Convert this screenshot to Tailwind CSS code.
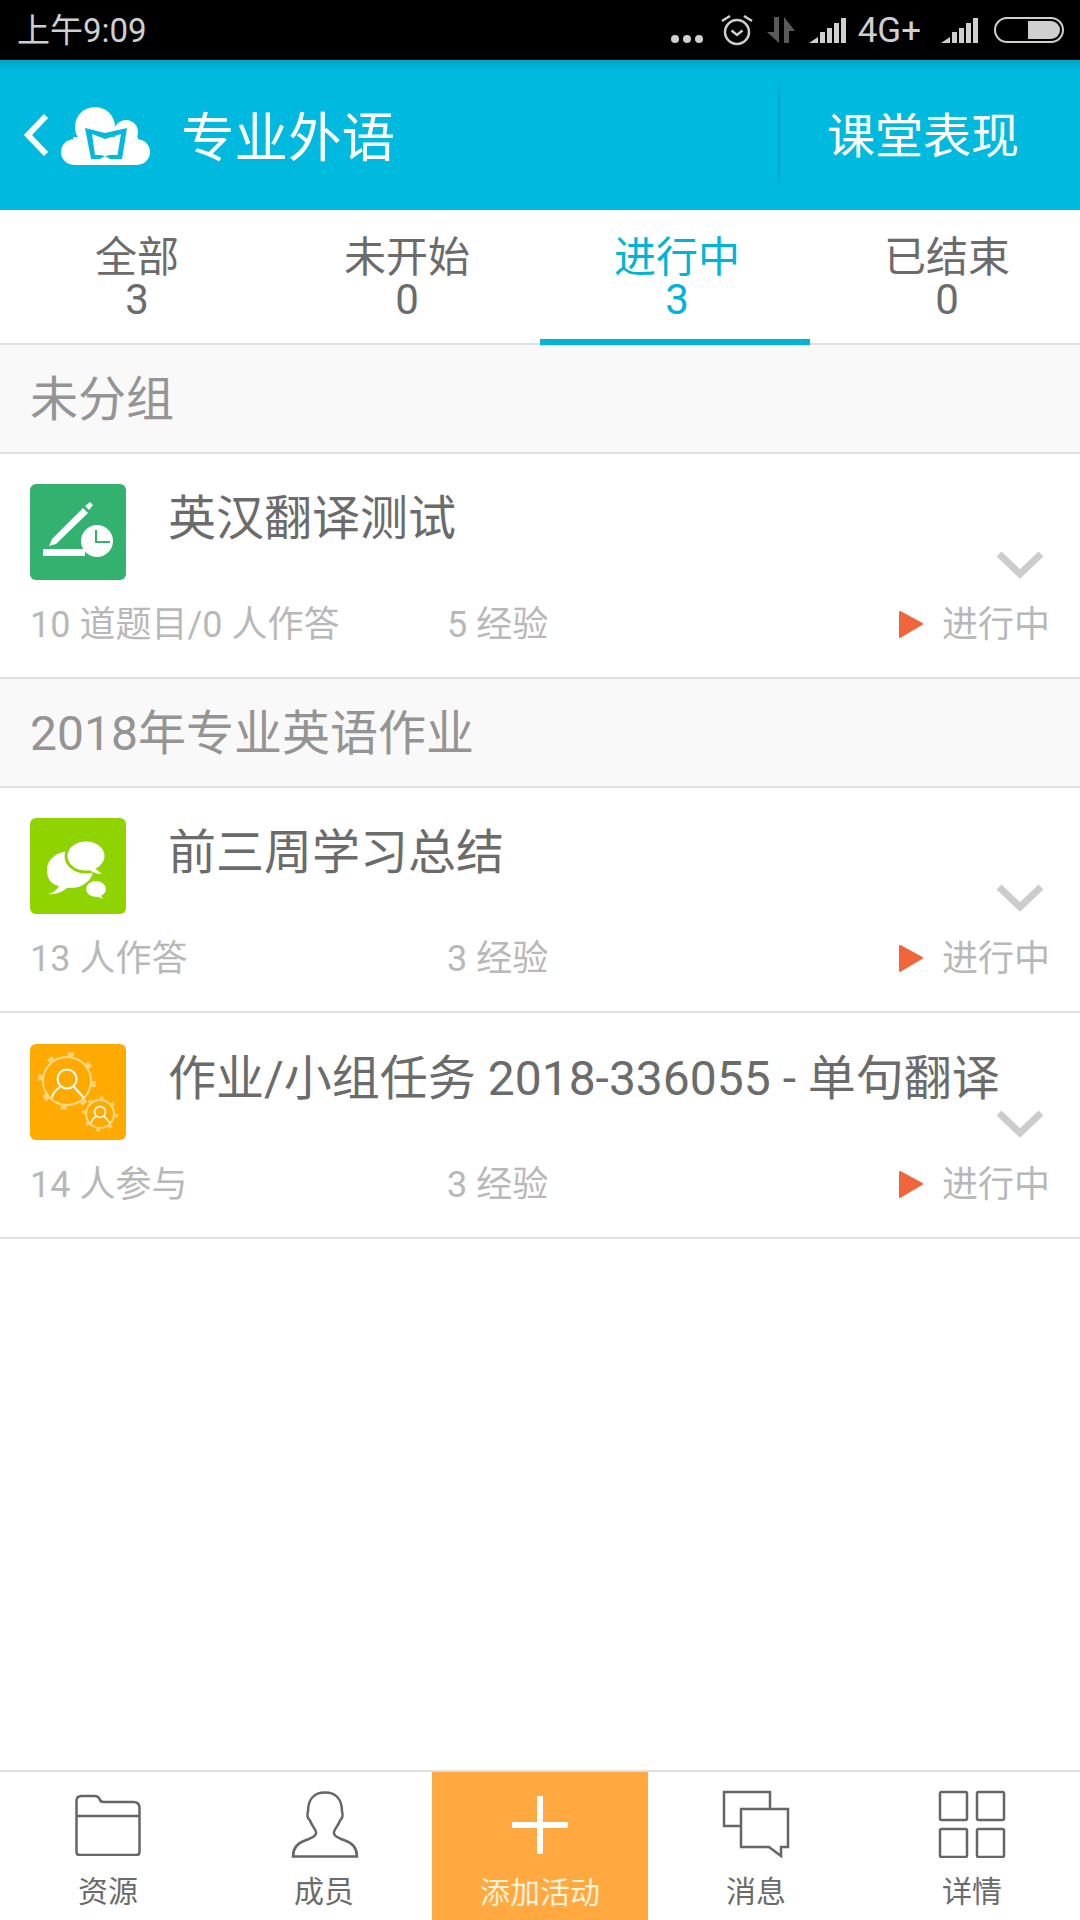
<!DOCTYPE html>
<html lang="zh-CN">
  <head>
    <meta charset="UTF-8" />
    <meta name="viewport" content="width=device-width, initial-scale=1.0" />
    <title>专业外语</title>
    <script src="https://cdn.jsdelivr.net/npm/@tailwindcss/browser@4"></script>
  </head>
  <body class="bg-white [font-family:Roboto,'Noto_Sans_CJK_SC',sans-serif]">
    <div class="flex flex-col w-[1080px] h-[1920px] overflow-hidden">
      <!-- status bar -->
      <div class="flex items-center h-[60px] bg-black text-[#cfcfcf] pl-[17px] pr-[16px] shrink-0">
        <span class="text-[33px] leading-none">上午9:09</span>
        <div class="ml-auto flex items-center">
          <svg width="32" height="10" viewBox="0 0 32 10" class="mt-[18px]" fill="#cfcfcf">
            <circle cx="4" cy="5" r="4" /><circle cx="16" cy="5" r="4" /><circle cx="28" cy="5" r="4" />
          </svg>
          <svg width="32" height="32" viewBox="0 0 32 32" class="ml-[18px]" fill="none" stroke="#cfcfcf" stroke-width="2.5">
            <circle cx="16" cy="18" r="12" />
            <path d="M10.500 16.500l5.500 4.500 5.500-4.500M1 7l8-5M31 7l-8-5" />
          </svg>
          <svg width="28" height="26" viewBox="0 0 28 26" class="ml-[14px]" fill="#5a5a5a">
            <path d="M7 0h5v26L0 15h7zM17 0l11 14h-6v12h-5z" />
          </svg>
          <svg width="37" height="25" viewBox="0 0 37 25" class="ml-[14px]" fill="#cfcfcf">
            <path d="M0 25l9-6v6zM11 14h5v11h-5zM18 10h5v15h-5zM25 5h5v20h-5zM32 0h5v25h-5z" />
          </svg>
          <span class="ml-[12px] text-[35px] leading-none">4G+</span>
          <svg width="37" height="25" viewBox="0 0 37 25" class="ml-[20px]" fill="#cfcfcf">
            <path d="M0 25l9-6v6zM11 14h5v11h-5zM18 10h5v15h-5zM25 5h5v20h-5zM32 0h5v25h-5z" />
          </svg>
          <div class="ml-[16px] flex justify-end w-[70px] h-[26px] rounded-full border-2 border-[#cfcfcf] p-[2px]">
            <div class="w-[32px] h-full rounded-r-full bg-[#cfcfcf]"></div>
          </div>
        </div>
      </div>

      <!-- header -->
      <div class="flex items-center h-[150px] shrink-0 bg-[#00b9df] bg-[linear-gradient(#00a5c5,#00b9df_11px)] text-white">
        <svg width="30" height="46" viewBox="0 0 30 46" class="ml-[22px]" fill="none" stroke="#fff" stroke-width="6">
          <path d="M24 4L6 23l18 19" />
        </svg>
        <svg width="89" height="58" viewBox="0 0 89 58" class="ml-[9px] mt-[2px]">
          <g fill="#fff">
            <circle cx="34" cy="20" r="20" /><circle cx="65" cy="25" r="12" />
            <circle cx="12.700" cy="45" r="12.700" /><circle cx="76.300" cy="45" r="12.700" />
            <path d="M12 30h65v28H12z" />
          </g>
          <path fill="#00b9df" fill-rule="evenodd" d="M24 21l20 5 22-5-5 31H49l-5-3-5 3h-9zM31 27l13 5 16-5-3.500 21H49l-5 1-5-1h-5z" />
        </svg>
        <span class="ml-[31px] mt-[7px] text-[53.5px] leading-none">专业外语</span>
        <div class="ml-auto w-[2px] h-[98px] bg-[#00a7ca]"></div>
        <span class="w-[300px] pr-[14px] text-center text-[48px] leading-none mt-[4px]">课堂表现</span>
      </div>

      <!-- tabs -->
      <div class="grid grid-cols-4 h-[135px] shrink-0 border-b-2 border-[#e0e0e0] text-[#6b6b6b] text-[42px] leading-[42px] text-center">
        <div class="pt-[27px] pl-[4px]"><div>全部</div><div>3</div></div>
        <div class="pt-[27px] pl-[4px]"><div>未开始</div><div>0</div></div>
        <div class="pt-[27px] pl-[4px] text-[#00b4d8] border-b-[6px] border-[#00b4d8] h-[135px]"><div>进行中</div><div>3</div></div>
        <div class="pt-[27px] pl-[4px]"><div>已结束</div><div>0</div></div>
      </div>

      <!-- 未分组 -->
      <div class="flex items-center h-[109px] shrink-0 px-[30px] pt-[2px] bg-[#f9f9f9] border-b-2 border-[#e0e0e0] text-[48px] text-[#949494]">未分组</div>
      <div class="relative h-[225px] shrink-0 px-[30px] pt-[30px] border-b-2 border-[#e0e0e0]">
        <div class="flex">
          <div class="w-[96px] h-[96px] rounded-[6px] bg-[#33b16f] shrink-0">
            <svg width="96" height="96" viewBox="0 0 96 96">
              <path fill="#fff" d="M13 65h42v7H13z" />
              <path fill="#fff" d="M19 62l3-7 31-31 5 5-32 31z" />
              <path fill="#fff" d="M55 22l5-4 3 3-4 5z" />
              <circle cx="67" cy="57" r="16" fill="#fff" />
              <path fill="none" stroke="#33b16f" stroke-width="2" d="M66 46v12h14" />
            </svg>
          </div>
          <div class="ml-[42px] text-[48px] leading-[70px] text-[#6b6b6b]">英汉翻译测试</div>
        </div>
        <div class="flex items-center mt-[20px] text-[36px] leading-[50px] text-[#b8b8b8]">
          <span class="w-[417px]">10 道题目/0 人作答</span>
          <span>5 经验</span>
          <span class="ml-auto flex items-center"><svg width="24" height="28" viewBox="0 0 24 28" class="mr-[19px] mb-[2px]"><path fill="#f0653a" stroke="#f0653a" stroke-width="2" stroke-linejoin="round" d="M1 2l22 12L1 27z" /></svg>进行中</span>
        </div>
        <svg width="48" height="28" viewBox="0 0 48 28" class="absolute right-[36px] top-[97px]" fill="none" stroke="#ccc" stroke-width="7"><path d="M3 3l21 20L45 3" /></svg>
      </div>

      <!-- 2018年专业英语作业 -->
      <div class="flex items-center h-[109px] shrink-0 px-[30px] pt-[2px] bg-[#f9f9f9] border-b-2 border-[#e0e0e0] text-[48px] text-[#949494]">2018年专业英语作业</div>
      <div class="relative h-[225px] shrink-0 px-[30px] pt-[30px] border-b-2 border-[#e0e0e0]">
        <div class="flex">
          <div class="w-[96px] h-[96px] rounded-[6px] bg-[#8fd400] shrink-0">
            <svg width="96" height="96" viewBox="0 0 96 96">
              <path fill="#fff" d="M18 76c6-1 9-5 11-8-10-2-12-10-12-16 0-13 14-20 26-19 11 1 22 9 20 21-2 10-12 17-26 16-5 4-12 7-19 6z" />
              <ellipse cx="56" cy="38" rx="20" ry="16" fill="#fff" stroke="#8fd400" stroke-width="3" />
              <path fill="#fff" d="M62 48l10 8c-4 0-9-1-14-5z" />
              <ellipse cx="66" cy="71" rx="11" ry="9" fill="#fff" stroke="#8fd400" stroke-width="2" />
              <path fill="#fff" d="M70 76l3 5-7-3z" />
            </svg>
          </div>
          <div class="ml-[42px] text-[48px] leading-[70px] text-[#6b6b6b]">前三周学习总结</div>
        </div>
        <div class="flex items-center mt-[20px] text-[36px] leading-[50px] text-[#b8b8b8]">
          <span class="w-[417px]">13 人作答</span>
          <span>3 经验</span>
          <span class="ml-auto flex items-center"><svg width="24" height="28" viewBox="0 0 24 28" class="mr-[19px] mb-[2px]"><path fill="#f0653a" stroke="#f0653a" stroke-width="2" stroke-linejoin="round" d="M1 2l22 12L1 27z" /></svg>进行中</span>
        </div>
        <svg width="48" height="28" viewBox="0 0 48 28" class="absolute right-[36px] top-[96px]" fill="none" stroke="#ccc" stroke-width="7"><path d="M3 3l21 20L45 3" /></svg>
      </div>
      <div class="relative h-[226px] shrink-0 px-[30px] pt-[31px] border-b-2 border-[#e0e0e0]">
        <div class="flex">
          <div class="w-[96px] h-[96px] rounded-[6px] bg-[#ffaa00] shrink-0">
            <svg width="96" height="96" viewBox="0 0 96 96" fill="none">
              <circle cx="37" cy="37" r="24" stroke="#ffd98a" stroke-width="2" />
              <circle cx="37" cy="37" r="26.5" stroke="#ffd27a" stroke-width="5" stroke-dasharray="6 14.8" />
              <circle cx="37" cy="35" r="9.5" stroke="#fff" stroke-width="2" />
              <path stroke="#fff" stroke-width="2" d="M22 54c1-6 5-9 8-11M44 43l10 11" />
              <circle cx="70" cy="70" r="14" stroke="#ffd98a" stroke-width="2" />
              <circle cx="70" cy="70" r="16" stroke="#ffd27a" stroke-width="3.5" stroke-dasharray="3.5 9" />
              <circle cx="70" cy="68" r="5.5" stroke="#fff" stroke-width="1.5" />
              <path stroke="#fff" stroke-width="1.5" d="M61 79c1-4 3-5 5-7M74 72l6 7" />
            </svg>
          </div>
          <div class="ml-[42px] text-[48px] leading-[70px] text-[#6b6b6b]">作业/小组任务 2018-336055 - 单句翻译</div>
        </div>
        <div class="flex items-center mt-[20px] text-[36px] leading-[50px] text-[#b8b8b8]">
          <span class="w-[417px]">14 人参与</span>
          <span>3 经验</span>
          <span class="ml-auto flex items-center"><svg width="24" height="28" viewBox="0 0 24 28" class="mr-[19px] mb-[2px]"><path fill="#f0653a" stroke="#f0653a" stroke-width="2" stroke-linejoin="round" d="M1 2l22 12L1 27z" /></svg>进行中</span>
        </div>
        <svg width="48" height="28" viewBox="0 0 48 28" class="absolute right-[36px] top-[97px]" fill="none" stroke="#ccc" stroke-width="7"><path d="M3 3l21 20L45 3" /></svg>
      </div>

      <!-- bottom nav -->
      <div class="mt-auto grid grid-cols-5 h-[150px] shrink-0 border-t-2 border-[#e0e0e0] text-[30px] leading-none text-[#6b6b6b] text-center">
        <div class="flex flex-col items-center">
          <svg width="66" height="62" viewBox="0 0 66 62" class="mt-[22px]" fill="none" stroke="#666" stroke-width="2.5">
            <path d="M1.5 22V7q0-5 5-5h13q4 0 5 3t4 3h30q6 0 6 6v44q0 3-3 3H4.500q-3 0-3-3zM1.500 22h63" />
          </svg>
          <span class="mt-[21px]">资源</span>
        </div>
        <div class="flex flex-col items-center">
          <svg width="68" height="68" viewBox="0 0 68 68" class="mt-[18px] ml-[2px]" fill="none" stroke="#666" stroke-width="2.500">
            <path d="M2 66.500c0-9 6-14 12-16 5-2 10-3 11-7 1-3-4-7-6-13-3-2-3-7-2-9 0-12 6-19 17-19s17 7 17 19c1 2 1 7-2 9-2 6-7 10-6 13 1 4 6 5 11 7 6 2 12 7 12 16z" />
          </svg>
          <span class="mt-[19px]">成员</span>
        </div>
        <div class="flex flex-col items-center bg-[#ffa940] text-white">
          <svg width="56" height="58" viewBox="0 0 56 58" class="mt-[24px]" fill="#fff">
            <path d="M25 0h6v26h25v6H31v26h-6V32H0v-6h25z" />
          </svg>
          <span class="mt-[24px] text-[#fff3dd]">添加活动</span>
        </div>
        <div class="flex flex-col items-center">
          <svg width="68" height="68" viewBox="0 0 68 68" class="mt-[18px]" fill="none" stroke="#666" stroke-width="2.500">
            <path d="M19 36H2V2h46v17M19 19h47v38h-7v9L47 57H19z" />
          </svg>
          <span class="mt-[19px]">消息</span>
        </div>
        <div class="flex flex-col items-center">
          <svg width="68" height="68" viewBox="0 0 68 68" class="mt-[18px]" fill="none" stroke="#666" stroke-width="2.500">
            <rect x="2" y="2" width="27" height="28" rx="1.500" /><rect x="39" y="2" width="27" height="28" rx="1.500" />
            <rect x="2" y="39" width="27" height="28" rx="1.500" /><rect x="39" y="39" width="27" height="28" rx="1.500" />
          </svg>
          <span class="mt-[19px]">详情</span>
        </div>
      </div>
    </div>
  </body>
</html>
